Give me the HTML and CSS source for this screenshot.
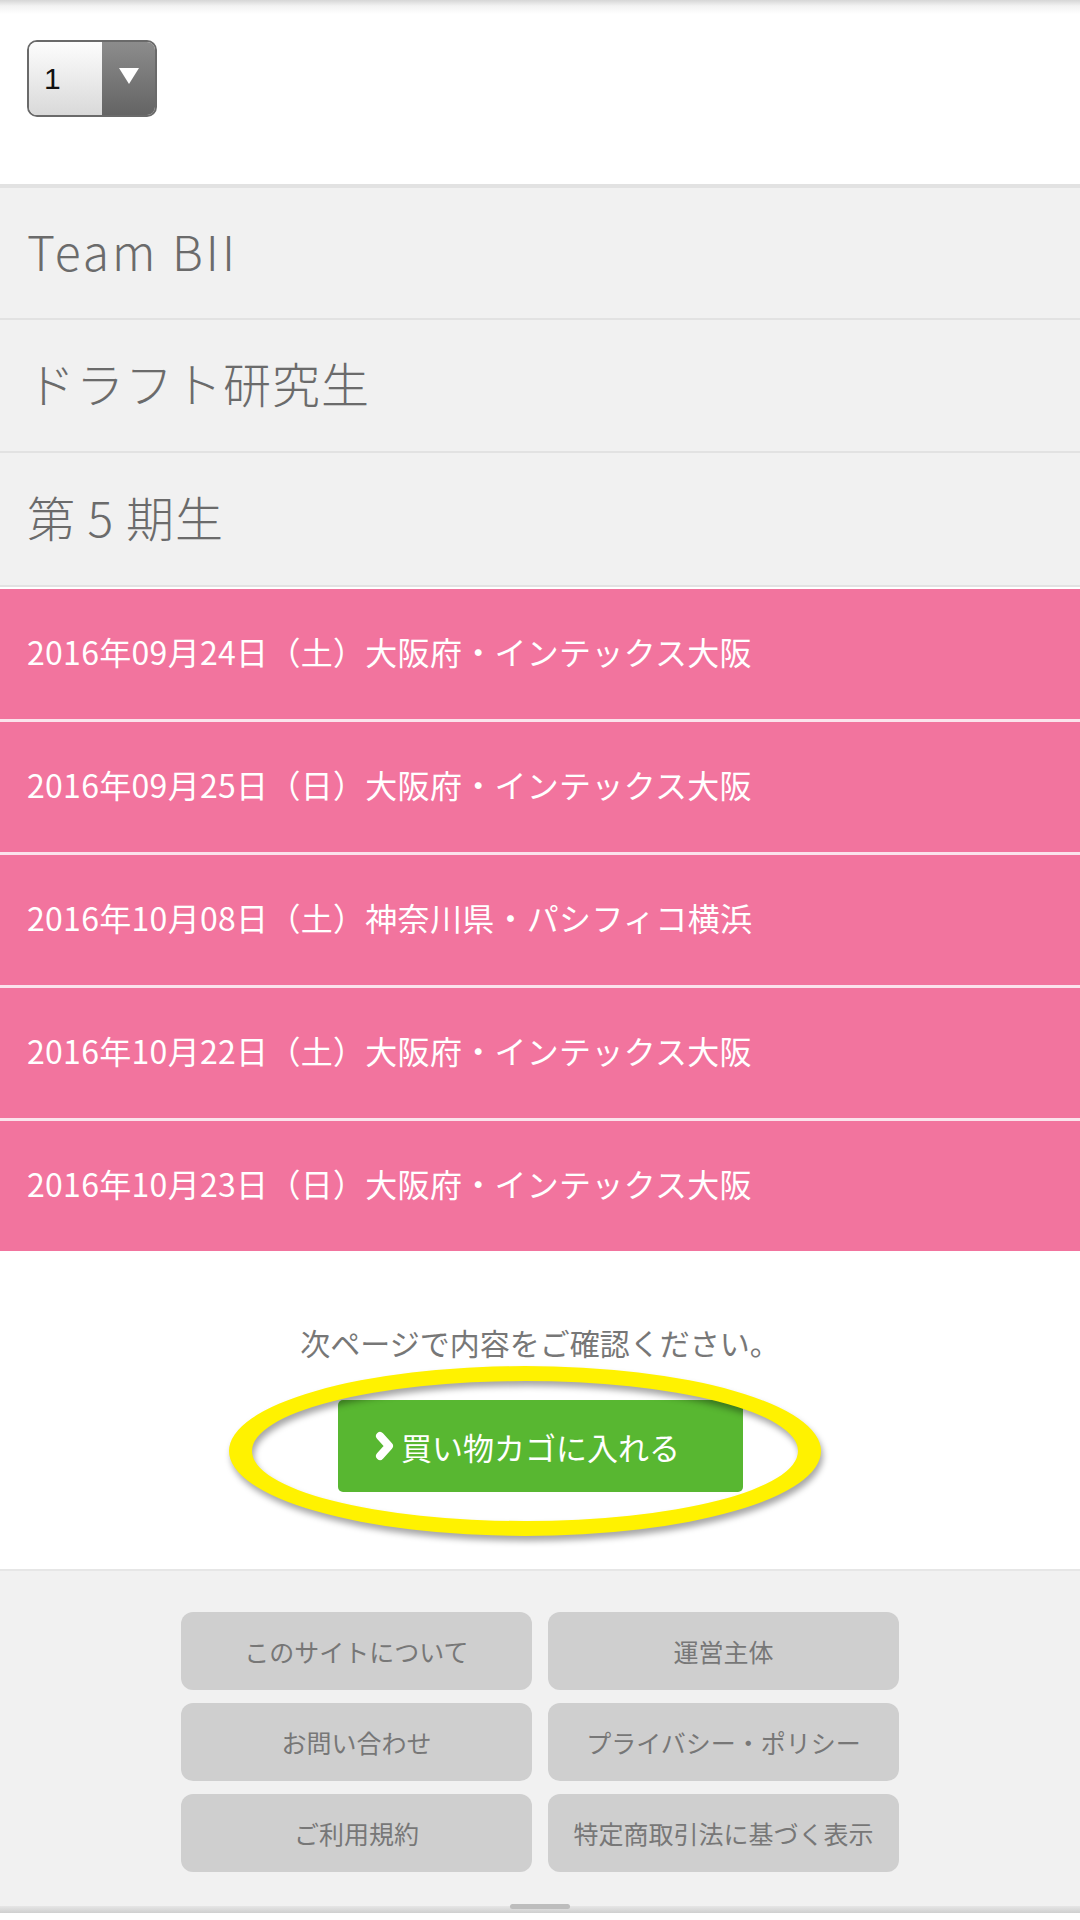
FILE: index.html
```html
<!DOCTYPE html>
<html lang="ja">
<head>
    <meta charset="UTF-8">
    <meta name="viewport" content="width=device-width, initial-scale=1.0">
    <title>買い物カゴ</title>
    <link rel="stylesheet" href="styles.css">
</head>
<body>
    <div class="qty">
        <div class="select">
            <span class="select-value">1</span>
            <span class="select-arrow"><i></i></span>
        </div>
    </div>

    <ul class="cats">
        <li class="cat cat-latin">Team BII</li>
        <li class="cat">ドラフト研究生</li>
        <li class="cat">第 5 期生</li>
    </ul>

    <ul class="dates">
        <li class="date">2016年09月24日（土）大阪府・インテックス大阪</li>
        <li class="date">2016年09月25日（日）大阪府・インテックス大阪</li>
        <li class="date">2016年10月08日（土）神奈川県・パシフィコ横浜</li>
        <li class="date">2016年10月22日（土）大阪府・インテックス大阪</li>
        <li class="date">2016年10月23日（日）大阪府・インテックス大阪</li>
    </ul>

    <div class="confirm">
        <p class="confirm-note">次ページで内容をご確認ください。</p>
        <button class="cart-btn" type="button">
            <svg class="chev" width="22" height="30" viewBox="0 0 22 30">
                <path d="M6 5 L15 15 L6 25" fill="none" stroke="#fff" stroke-width="8" stroke-linecap="round" stroke-linejoin="round"/>
            </svg>
            買い物カゴに入れる
        </button>
        <!-- hand drawn highlight over the button -->
        <svg class="marker" width="620" height="200" viewBox="0 0 620 200">
            <path fill="#fff200" fill-rule="evenodd" d="M7 96 A296 85 0 1 0 599 96 A296 85 0 1 0 7 96 Z M30 96 A273 70 0 1 0 576 96 A273 70 0 1 0 30 96 Z"/>
        </svg>
    </div>

    <footer class="footer">
        <nav class="footer-links">
            <a href="#">このサイトについて</a>
            <a href="#">運営主体</a>
            <a href="#">お問い合わせ</a>
            <a href="#">プライバシー・ポリシー</a>
            <a href="#">ご利用規約</a>
            <a href="#">特定商取引法に基づく表示</a>
        </nav>
    </footer>
    <div class="bottom-shade"><span></span></div>
</body>
</html>
```

FILE: styles.css
```css
body {
    margin: 0;
    width: 1080px;
    font-family: "Noto Sans CJK JP", "Noto Sans", sans-serif;
    background: #fff;
}
ul {
    margin: 0;
    padding: 0;
    list-style: none;
}

.qty {
    height: 188px;
    box-sizing: border-box;
    padding: 40px 0 0 27px;
    background: linear-gradient(#d6d6d6 0, #f3f3f3 6px, #fff 14px);
    border-bottom: 4px solid #e2e2e2;
}
.select {
    display: flex;
    width: 130px;
    height: 77px;
    box-sizing: border-box;
    border: 2px solid #6a6a6a;
    border-radius: 10px;
    overflow: hidden;
}
.select-value {
    width: 73px;
    box-sizing: border-box;
    padding-left: 15px;
    display: flex;
    align-items: center;
    font-family: "Liberation Sans", Arial, sans-serif;
    font-size: 30px;
    color: #111;
    background: linear-gradient(#fdfdfd, #d9d9d9);
}
.select-arrow {
    flex: 1;
    display: flex;
    align-items: center;
    justify-content: center;
    background: linear-gradient(#8c8c8c, #646464);
}
.select-arrow i {
    width: 0;
    height: 0;
    border-left: 10px solid transparent;
    border-right: 10px solid transparent;
    border-top: 16px solid #fff;
    margin-top: -6px;
}

.cats {
    background: #f1f1f1;
    border-bottom: 2px solid #e2e2e2;
    margin-bottom: 2px;
}
.cat {
    height: 123px;
    padding: 0 0 7px 27px;
    display: flex;
    align-items: center;
    font-size: 48px;
    font-weight: 300;
    letter-spacing: 1px;
    color: #6b6b6b;
    border-bottom: 2px solid #e2e2e2;
}
.cat-latin {
    letter-spacing: 3px;
}
.cat:nth-child(2) {
    height: 124px;
}
.cat:last-child {
    height: 125px;
    border-bottom: none;
}

.dates {
    background: #fbe3ec;
}
.date {
    height: 124px;
    padding: 0 0 6px 27px;
    display: flex;
    align-items: center;
    font-size: 32px;
    letter-spacing: 0.3px;
    color: #fff;
    background: #f2749e;
    margin-bottom: 3px;
}
.date:last-child {
    margin-bottom: 0;
}

.confirm {
    position: relative;
    padding: 71px 0 77px;
    text-align: center;
}
.confirm-note {
    margin: 0;
    font-size: 30px;
    line-height: 40px;
    color: #777;
}
.cart-btn {
    margin-top: 38px;
    width: 405px;
    height: 92px;
    padding: 0 26px 0 0;
    border: none;
    border-radius: 5px;
    background: #58b731;
    color: #fff;
    font-family: inherit;
    font-size: 31px;
    display: inline-flex;
    align-items: center;
    justify-content: center;
    gap: 5px;
}
.chev {
    display: block;
}
.marker {
    position: absolute;
    left: 222px;
    top: 104px;
    filter: drop-shadow(2px 5px 3px rgba(0, 0, 0, 0.35));
}

.footer {
    background: #f1f1f1;
    border-top: 2px solid #e6e6e6;
    padding: 41px 0 34px;
}
.footer-links {
    display: grid;
    grid-template-columns: 351px 351px;
    grid-auto-rows: 78px;
    gap: 13px 16px;
    justify-content: center;
}
.footer-links a {
    display: flex;
    align-items: center;
    justify-content: center;
    background: #cfcfcf;
    border-radius: 12px;
    font-size: 25px;
    color: #777;
    text-decoration: none;
}

.bottom-shade {
    height: 7px;
    background: linear-gradient(#e6e6e6, #cfcfcf);
    display: flex;
    justify-content: center;
}
.bottom-shade span {
    width: 60px;
    height: 5px;
    margin-top: -2px;
    border-radius: 3px;
    background: #bdbdbd;
}
```
